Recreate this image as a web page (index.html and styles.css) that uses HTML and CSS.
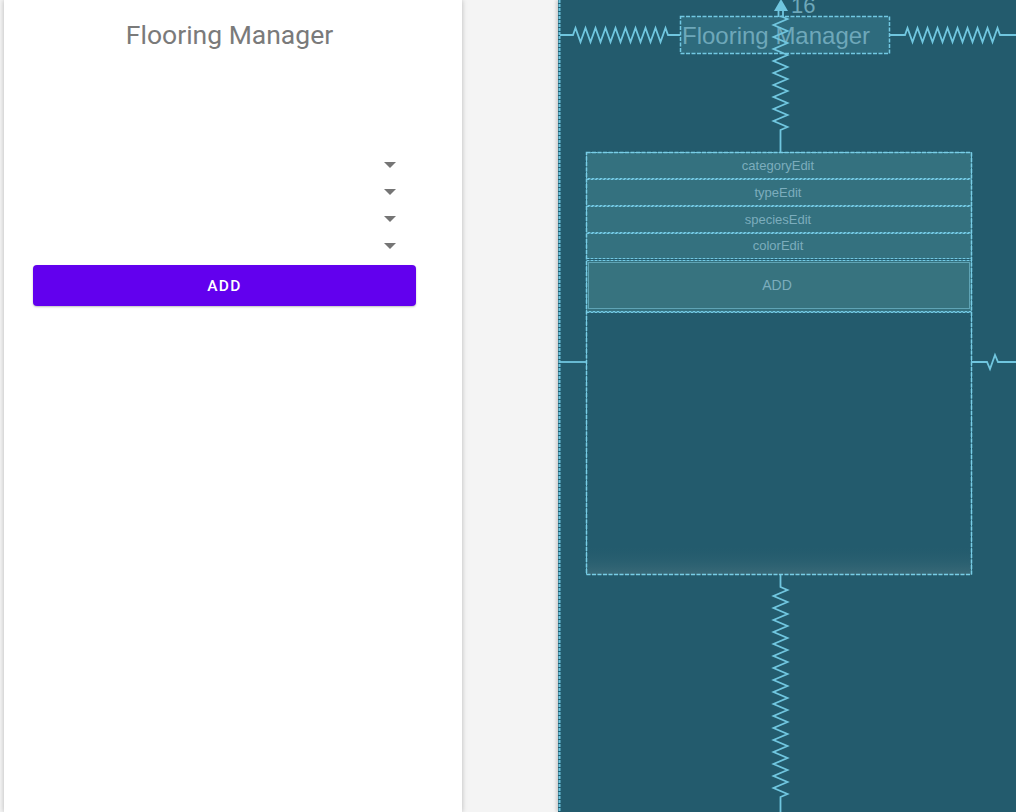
FILE: index.html
```html
<!DOCTYPE html>
<html>
<head>
<meta charset="utf-8">
<link rel="stylesheet" href="styles.css">
</head>
<body>
<div class="stage">
  <div class="phone">
    <div class="title">Flooring Manager</div>
    <div class="form">
      <div class="spin"><span class="caret"></span></div>
      <div class="spin"><span class="caret"></span></div>
      <div class="spin"><span class="caret"></span></div>
      <div class="spin"><span class="caret"></span></div>
      <div class="btnwrap"><button class="btn">ADD</button></div>
    </div>
  </div>
  <div class="blueprint">
    <svg class="bp" width="458" height="812" viewBox="0 0 458 812" xmlns="http://www.w3.org/2000/svg">
      <defs>
        <linearGradient id="fade" x1="0" y1="0" x2="0" y2="1">
          <stop offset="0" stop-color="#235b6d" stop-opacity="0"/>
          <stop offset="1" stop-color="#3a6a78" stop-opacity="1"/>
        </linearGradient>
      </defs>
      <line x1="1.5" y1="0" x2="1.5" y2="812" class="edge"/>
      <!-- title box -->
      <rect x="122.5" y="16.5" width="209" height="37" class="tbox"/>
      <text x="124" y="44" class="ttext">Flooring Manager</text>
      <!-- horizontal springs -->
      <path class="spring" d="M2,35 H15 l2.5,-7 l5,14 l5,-14 l5,14 l5,-14 l5,14 l5,-14 l5,14 l5,-14 l5,14 l5,-14 l5,14 l5,-14 l5,14 l5,-14 l5,14 l5,-14 l5,14 l5,-14 l2.5,7 H122"/>
      <path class="spring" d="M331,35 H347 l2.5,-7 l5,14 l5,-14 l5,14 l5,-14 l5,14 l5,-14 l5,14 l5,-14 l5,14 l5,-14 l5,14 l5,-14 l5,14 l5,-14 l5,14 l5,-14 l5,14 l5,-14 l2.5,7 H458"/>
      <!-- top vertical spring -->
      <path class="spring" d="M222.5,16 l7,3 l-14,6 l14,6 l-14,6 l14,6 l-14,6 l14,6 l-14,6 l14,6 l-14,6 l14,6 l-14,6 l14,6 l-14,6 l14,6 l-14,6 l14,6 l-14,6 l14,6 l-7,3 V152"/>
      <path class="arrow" d="M216,11 L223,-1 L230,11 Z"/>
      <line x1="220.5" y1="10" x2="220.5" y2="17" class="spring"/>
      <line x1="225" y1="10" x2="225" y2="17" class="spring"/>
      <text x="233" y="13" class="num">16</text>
      <!-- group -->
      <rect x="28.5" y="152.5" width="385" height="26" class="row"/>
      <rect x="28.5" y="179.5" width="385" height="26" class="row"/>
      <rect x="28.5" y="206.5" width="385" height="26" class="row"/>
      <rect x="28.5" y="233.5" width="385" height="25" class="row"/>
      <rect x="28.5" y="260.5" width="385" height="51" class="row"/>
      <rect x="30.5" y="262.5" width="381" height="46" class="inner"/>
      <rect x="28.5" y="312.5" width="385" height="262" class="list"/>
      <rect x="29" y="545" width="384" height="30" fill="url(#fade)"/>
      <rect x="28.5" y="152.5" width="385" height="422" class="group"/>
      <text x="220" y="170" class="lbl">categoryEdit</text>
      <text x="220" y="197" class="lbl">typeEdit</text>
      <text x="220" y="224" class="lbl">speciesEdit</text>
      <text x="220" y="250" class="lbl">colorEdit</text>
      <text x="219" y="290" class="lbl add">ADD</text>
      <!-- side lines -->
      <path class="spring" d="M2,362 H28"/>
      <path class="spring" d="M413,362 H429 L432,369 L437,355 L440,362 H458"/>
      <!-- bottom spring -->
      <path class="spring" d="M222.5,575 V587 l7,3 l-14,6 l14,6 l-14,6 l14,6 l-14,6 l14,6 l-14,6 l14,6 l-14,6 l14,6 l-14,6 l14,6 l-14,6 l14,6 l-14,6 l14,6 l-14,6 l14,6 l-14,6 l14,6 l-14,6 l14,6 l-14,6 l14,6 l-14,6 l14,6 l-14,6 l14,6 l-14,6 l14,6 l-14,6 l14,6 l-14,6 l14,6 l-7,3 V812"/>
    </svg>
  </div>
</div>
</body>
</html>
```
FILE: styles.css
```css
html, body {
  margin: 0;
  padding: 0;
  background: #f4f4f4;
}
.stage {
  width: 1016px;
  height: 812px;
  display: flex;
  overflow: hidden;
}
.phone {
  width: 458px;
  height: 812px;
  margin-left: 4px;
  background: #ffffff;
  box-shadow: 0 0 5px rgba(0,0,0,0.25);
  flex: none;
}
.title {
  margin-top: 16px;
  margin-left: 121px;
  width: 209px;
  height: 37px;
  line-height: 37px;
  text-align: center;
  font-family: Roboto, "Liberation Sans", sans-serif;
  font-size: 26.5px;
  color: #7a7a7a;
  white-space: nowrap;
}
.form {
  margin-top: 99px;
  margin-left: 28px;
  width: 385px;
}
.spin {
  height: 26.75px;
  display: flex;
  align-items: center;
  justify-content: flex-end;
  padding-right: 21px;
}
.caret {
  width: 0;
  height: 0;
  border-left: 6px solid transparent;
  border-right: 6px solid transparent;
  border-top: 6px solid #757575;
}
.btnwrap {
  padding: 6px 1px;
}
.btn {
  display: block;
  width: 100%;
  height: 41px;
  border: none;
  border-radius: 4px;
  background: #6200ee;
  color: #ffffff;
  font-family: Roboto, "Liberation Sans", sans-serif;
  font-weight: 500;
  font-size: 15.5px;
  letter-spacing: 1.4px;
  box-shadow: 0 1px 2px rgba(0,0,0,0.25);
  padding: 0;
}
.blueprint {
  margin-left: 96px;
  width: 458px;
  height: 812px;
  background: #235b6d;
  flex: none;
  box-shadow: -2px 0 3px rgba(0,0,0,0.15);
}
.bp {
  display: block;
}
.edge {
  stroke: #6cc4de;
  stroke-width: 2;
  stroke-dasharray: 3 1;
}
.tbox {
  fill: #2e6b7d;
  stroke: #72c8e2;
  stroke-width: 1.5;
  stroke-dasharray: 4 1.5;
}
.ttext {
  font-family: "Liberation Sans", Arial, sans-serif;
  font-size: 24px;
  fill: #6ea8ba;
}
.spring {
  fill: none;
  stroke: #70c6df;
  stroke-width: 1.8;
}
.arrow {
  fill: #70c6df;
}
.num {
  font-family: "Liberation Sans", Arial, sans-serif;
  font-size: 22px;
  fill: #6ea8ba;
}
.row {
  fill: #34717f;
  stroke: #72c8e2;
  stroke-width: 1;
  stroke-dasharray: 3 1;
}
.inner {
  fill: #37737f;
  stroke: #5fa4b5;
  stroke-width: 1;
}
.list {
  fill: #235b6d;
  stroke: #72c8e2;
  stroke-width: 1;
  stroke-dasharray: 3 1;
}
.group {
  fill: none;
  stroke: #78cde6;
  stroke-width: 1.5;
  stroke-dasharray: 4 1.5;
}
.lbl {
  font-family: "Liberation Sans", Arial, sans-serif;
  font-size: 13px;
  fill: #7cadbd;
  text-anchor: middle;
}
.add {
  font-size: 14px;
}
```
